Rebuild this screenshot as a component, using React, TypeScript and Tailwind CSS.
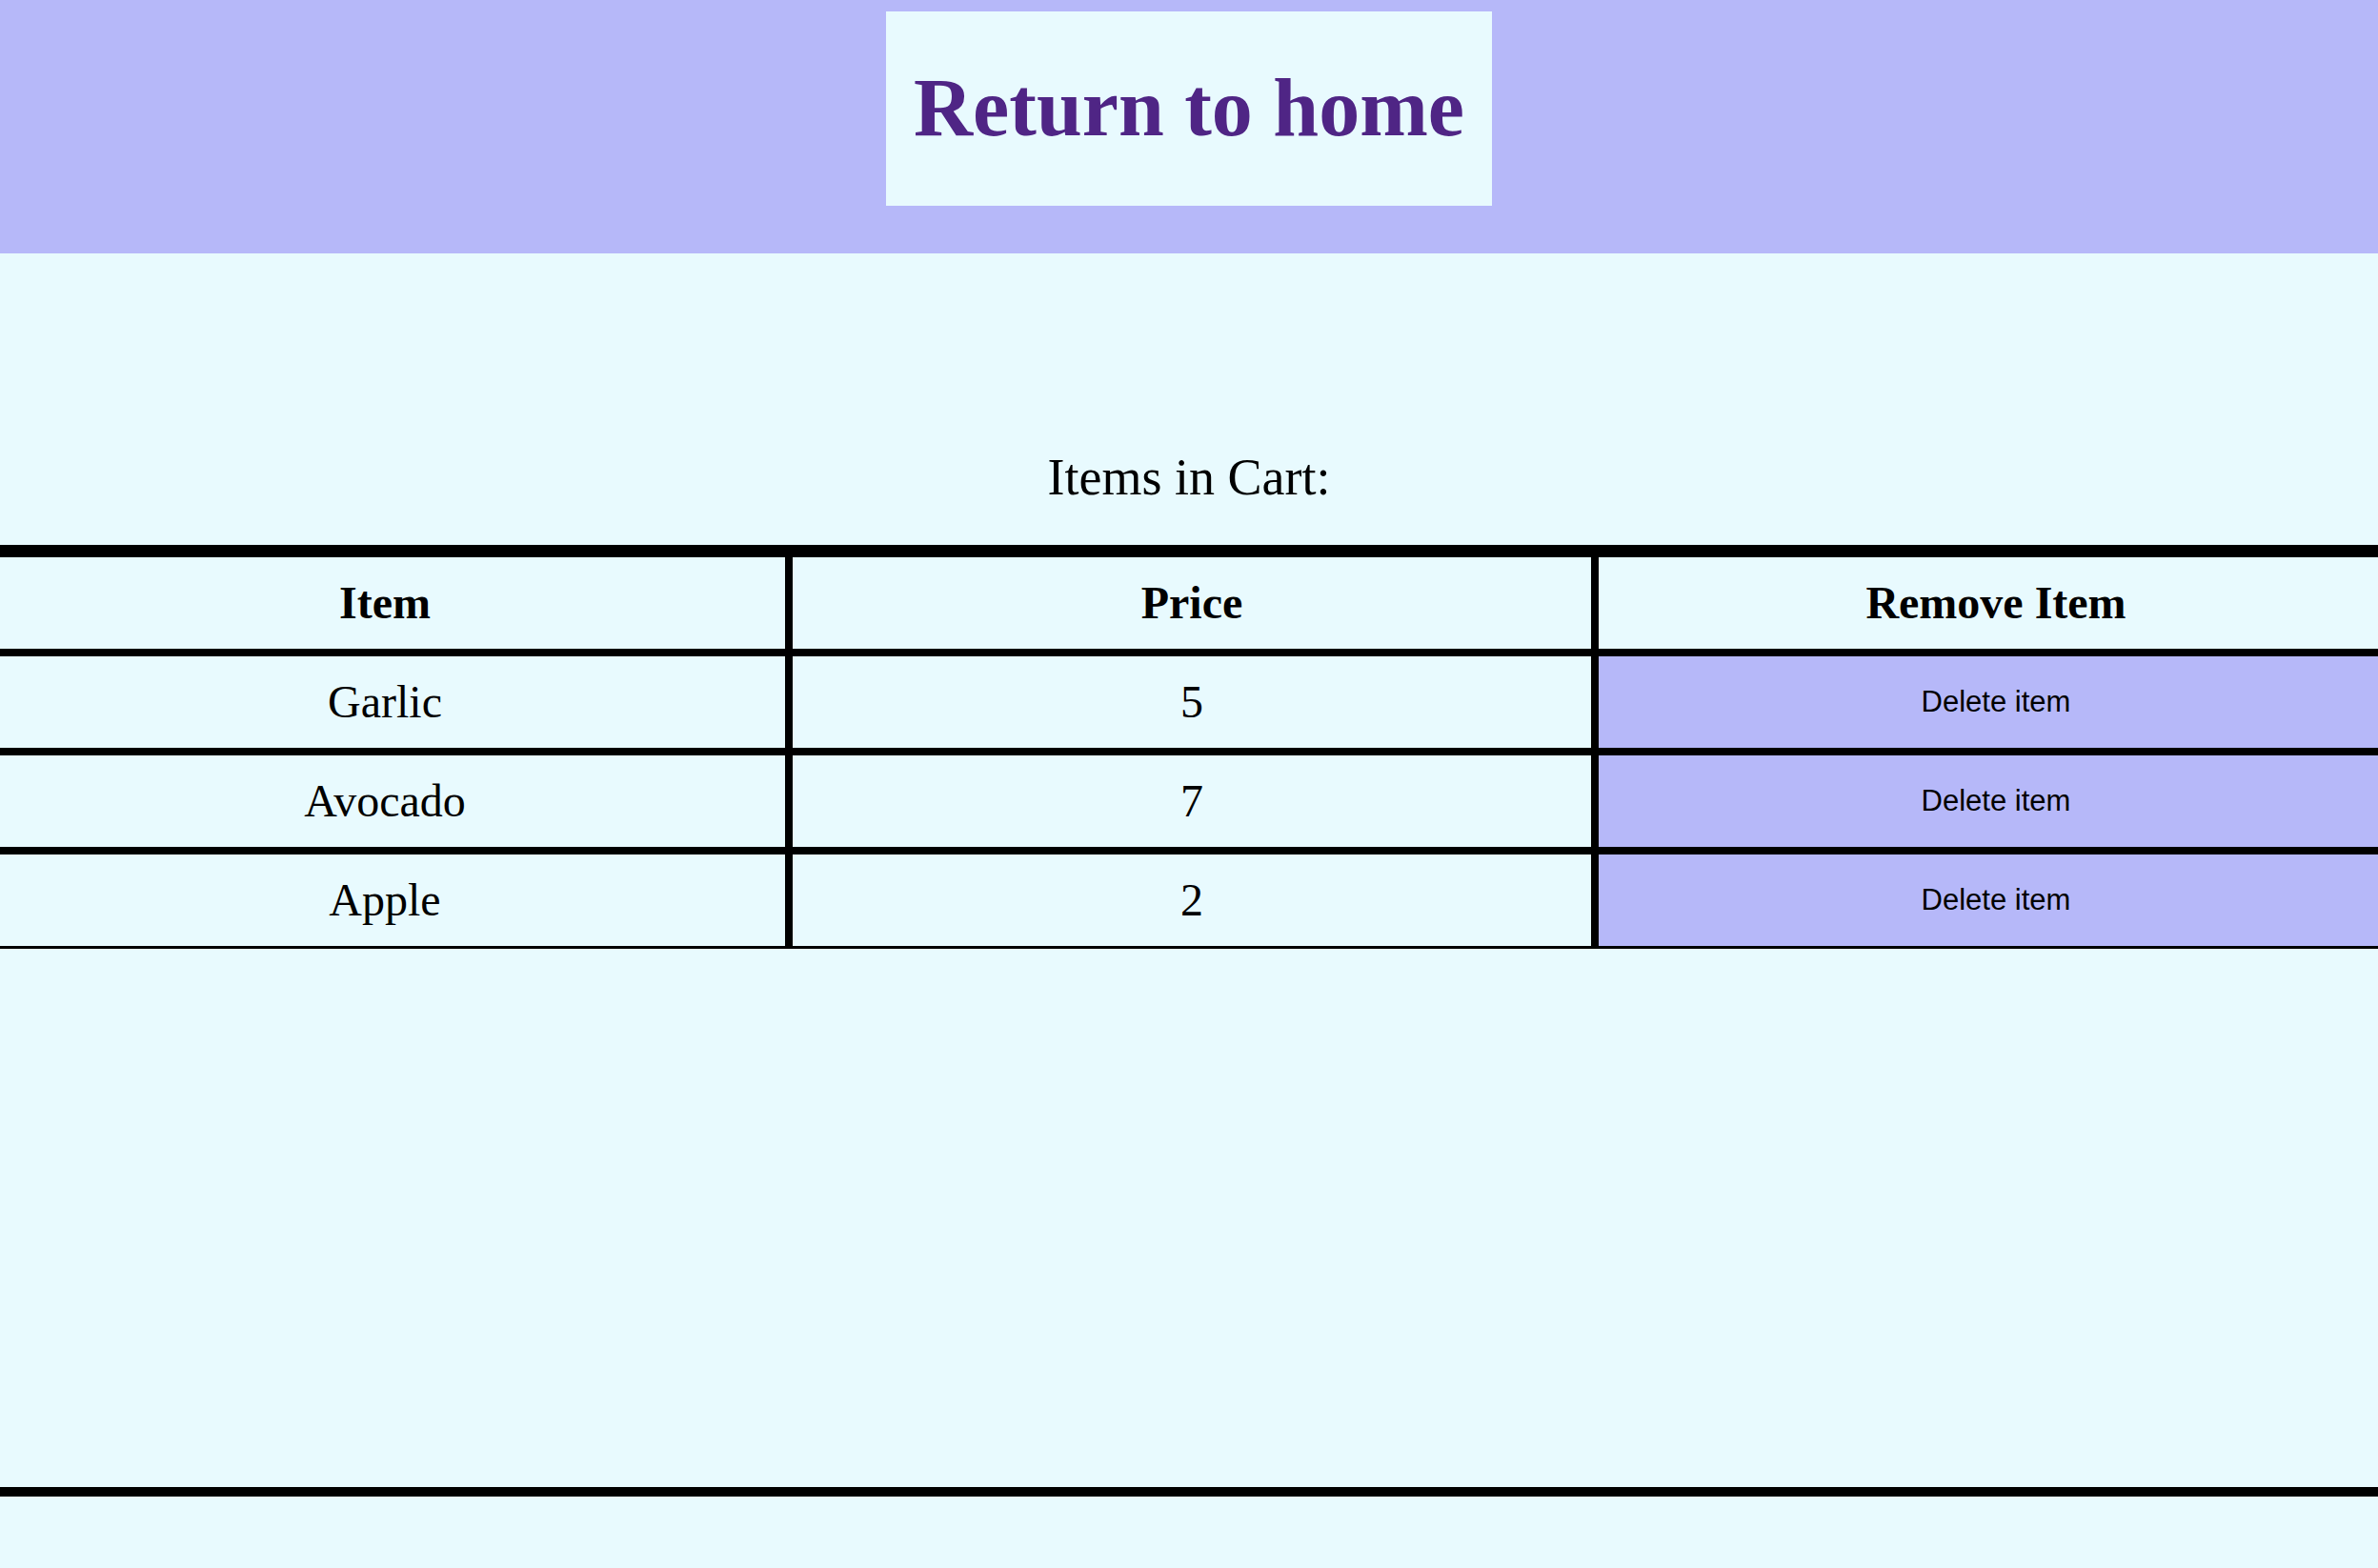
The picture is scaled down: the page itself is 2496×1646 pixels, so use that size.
import React from "react";

type CartItem = {
  name: string;
  price: number;
};

const items: CartItem[] = [
  { name: "Garlic", price: 5 },
  { name: "Avocado", price: 7 },
  { name: "Apple", price: 2 },
];

export default function App() {
  return (
    <div className="min-h-screen overflow-hidden bg-[#e8fafe] font-['Liberation_Serif',serif] text-black">
      <header className="flex h-[266px] justify-center bg-[#b6b8f9] pt-[12px]">
        <a
          href="#"
          className="h-[204px] bg-[#e8fafe] px-[29px] pt-[51px] text-[86px] font-bold leading-[normal] text-[#4f2585]"
        >
          Return to home
        </a>
      </header>

      <h2 className="mt-[204px] text-center text-[54px] leading-[normal]">
        Items in Cart:
      </h2>

      <div className="mx-[-16px] mt-[40px] border-t-[13px] border-black">
        <div className="flex h-[104px] border-b-[8px] border-black text-[48px] font-bold">
          <div className="flex w-[848px] items-center justify-center border-r-[8px] border-black">
            Item
          </div>
          <div className="flex w-[846px] items-center justify-center border-r-[8px] border-black">
            Price
          </div>
          <div className="flex flex-1 items-center justify-center">
            Remove Item
          </div>
        </div>
        {items.map((item, index) => (
          <div
            key={index}
            className={
              index === items.length - 1
                ? "flex h-[99px] border-b-[3px] border-black text-[48px]"
                : "flex h-[104px] border-b-[8px] border-black text-[48px]"
            }
          >
            <div className="flex w-[848px] items-center justify-center border-r-[8px] border-black">
              {item.name}
            </div>
            <div className="flex w-[846px] items-center justify-center border-r-[8px] border-black">
              {item.price}
            </div>
            <button className="flex flex-1 items-center justify-center bg-[#b6b8f9] font-['Liberation_Sans',sans-serif] text-[31px]">
              Delete item
            </button>
          </div>
        ))}
      </div>

      <div className="mt-[565px] h-[10px] bg-black" />
    </div>
  );
}
